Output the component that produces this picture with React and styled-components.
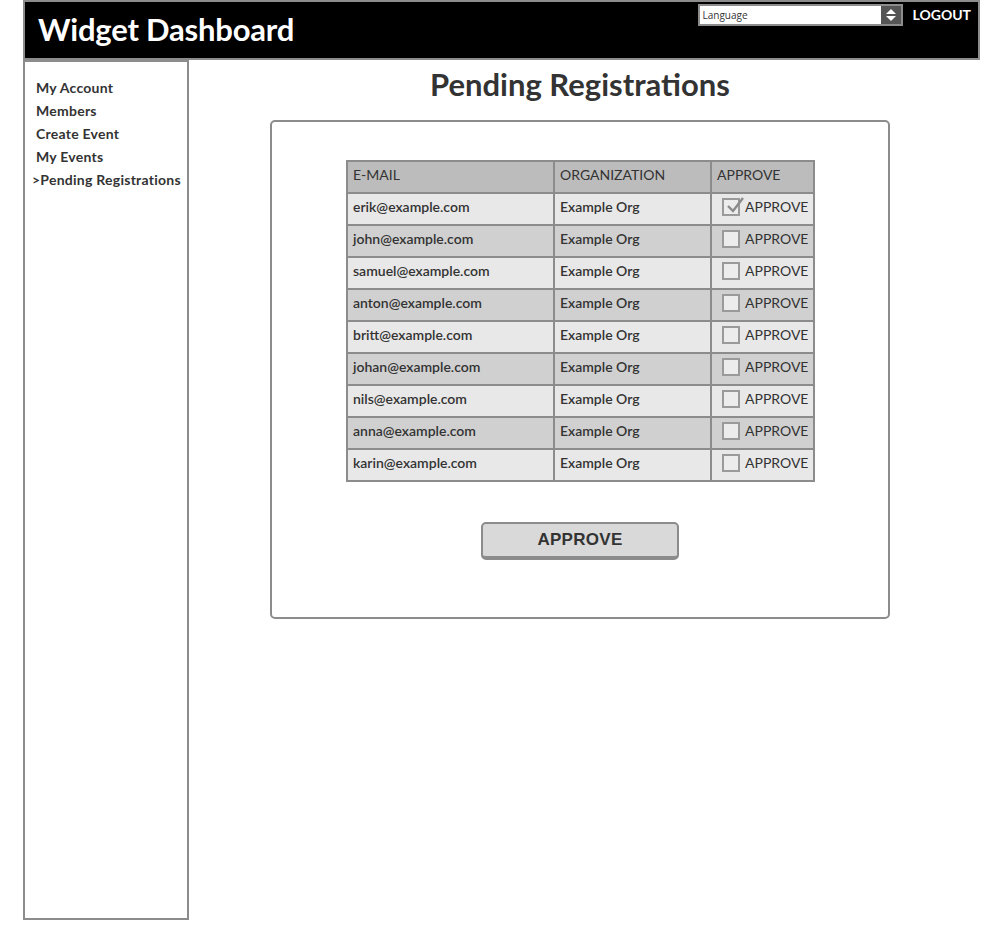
import React from 'react';
import styled, {createGlobalStyle} from 'styled-components';

const GlobalStyle = createGlobalStyle`
  body {
    margin: 0;
    background: #fff;
    font-family: Lato, "Open Sans", sans-serif;
  }
`;

const rows = [
    {email: 'erik@example.com', checked: true},
    {email: 'john@example.com'},
    {email: 'samuel@example.com'},
    {email: 'anton@example.com'},
    {email: 'britt@example.com'},
    {email: 'johan@example.com'},
    {email: 'nils@example.com'},
    {email: 'anna@example.com'},
    {email: 'karin@example.com'},
];

const menu = ['My Account', 'Members', 'Create Event', 'My Events', '>Pending Registrations'];

const SelectArrows = () => (
    <svg width="12" height="14" viewBox="0 0 12 14">
        <path d="M6 1 L11 6 H1 Z" fill="#fff"/>
        <path d="M6 13 L11 8 H1 Z" fill="#fff"/>
    </svg>
);

const CheckMark = () => (
    <svg width="20" height="20" viewBox="0 0 20 20" style={{position: 'absolute', left: 1, top: -4}}>
        <path d="M3 10 L8 15 L18 2" fill="none" stroke="#8a8a8a" strokeWidth="2.4"/>
    </svg>
);

const App = () => {

    return (
        <Page>
            <GlobalStyle/>
            <Header>
                <Logo>Widget Dashboard</Logo>
                <HeaderTools>
                    <Select>
                        <span>Language</span>
                        <SelectButton><SelectArrows/></SelectButton>
                    </Select>
                    <Logout>LOGOUT</Logout>
                </HeaderTools>
            </Header>
            <Body>
                <Sidebar>
                    <ul>
                        {menu.map((m, i) => (
                            <MenuItem key={m} active={i === menu.length - 1}>{m}</MenuItem>
                        ))}
                    </ul>
                </Sidebar>
                <Main>
                    <Title>Pending Registrations</Title>
                    <Panel>
                        <Table>
                            <thead>
                            <tr>
                                <Th>E-MAIL</Th>
                                <Th>ORGANIZATION</Th>
                                <Th>APPROVE</Th>
                            </tr>
                            </thead>
                            <tbody>
                            {rows.map((r, i) => (
                                <Row key={r.email} dark={i % 2 === 1}>
                                    <Td>{r.email}</Td>
                                    <Td>Example Org</Td>
                                    <Td>
                                        <CheckLabel>
                                            <Box>{r.checked && <CheckMark/>}</Box>
                                            APPROVE
                                        </CheckLabel>
                                    </Td>
                                </Row>
                            ))}
                            </tbody>
                        </Table>
                        <ApproveButton>APPROVE</ApproveButton>
                    </Panel>
                </Main>
            </Body>
        </Page>
    )
}

const Page = styled.div`
  width: 1000px;
  padding-left: 23px;
  box-sizing: border-box;
`;

const Header = styled.header`
  width: 957px;
  height: 60px;
  box-sizing: border-box;
  background: #000;
  border: 2px solid #8c8c8c;
  display: flex;
  justify-content: space-between;
  align-items: flex-start;
`;

const Logo = styled.h1`
  margin: 10px 0 0 13px;
  color: #fff;
  font-size: 31px;
  font-weight: 700;
  line-height: 34px;
  letter-spacing: -0.2px;
`;

const HeaderTools = styled.div`
  display: flex;
  align-items: center;
  margin-top: 2px;
  margin-right: 7px;
`;

const Select = styled.div`
  width: 205px;
  height: 22px;
  box-sizing: border-box;
  border: 2px solid #8c8c8c;
  background: #fff;
  display: flex;
  align-items: center;
  justify-content: space-between;

  span {
    font-family: "Open Sans", sans-serif;
    font-size: 10px;
    color: #333;
    padding-left: 3px;
  }
`;

const SelectButton = styled.div`
  width: 20px;
  height: 100%;
  background: #555;
  display: flex;
  align-items: center;
  justify-content: center;
`;

const Logout = styled.span`
  margin-left: 10px;
  color: #fff;
  font-weight: 700;
  font-size: 14px;
  margin-top: -2px;
`;

const Body = styled.div`
  display: flex;
`;

const Sidebar = styled.nav`
  width: 166px;
  height: 860px;
  box-sizing: border-box;
  border: 2px solid #8c8c8c;
  background: #fff;

  ul {
    list-style: none;
    margin: 0;
    padding: 14px 0 0 11px;
  }
`;

const MenuItem = styled.li`
  font-size: 14px;
  font-weight: 700;
  color: #333;
  line-height: 23px;
  letter-spacing: 0.25px;
  margin-left: ${props => props.active ? '-4px' : '0'};
`;

const Main = styled.main`
  flex: 1;
  display: flex;
  flex-direction: column;
  padding-left: 81px;
`;

const Title = styled.h2`
  width: 620px;
  margin: 4px 0 0;
  text-align: center;
  font-size: 31px;
  font-weight: 700;
  color: #333;
  line-height: 40px;
`;

const Panel = styled.section`
  width: 620px;
  height: 499px;
  margin-top: 16px;
  box-sizing: border-box;
  border: 2px solid #8c8c8c;
  border-radius: 5px;
  padding: 38px 0 0 74px;
`;

const Table = styled.table`
  border-collapse: collapse;
  border: 2px solid #8c8c8c;
  font-size: 14px;
  color: #333;
`;

const Th = styled.th`
  height: 25px;
  padding: 0 5px 5px;
  text-align: left;
  font-weight: 400;
  font-size: 14px;
  background: #bcbcbc;
  border: 2px solid #8c8c8c;

  &:nth-child(1) { width: 195px; }
  &:nth-child(2) { width: 145px; }
  &:nth-child(3) { width: 88px; }
`;

const Row = styled.tr`
  background: ${props => props.dark ? '#d0d0d0' : '#e8e8e8'};
`;

const Td = styled.td`
  height: 25px;
  padding: 0 5px 5px;
  border: 2px solid #8c8c8c;
  font-weight: 600;
  white-space: nowrap;
`;

const CheckLabel = styled.div`
  display: flex;
  align-items: center;
  gap: 5px;
  padding-left: 5px;
  font-weight: 400;
`;

const Box = styled.span`
  position: relative;
  width: 14px;
  height: 14px;
  border: 2px solid #9a9a9a;
  background: #ececec;
`;

const ApproveButton = styled.button`
  display: block;
  margin: 40px 0 0 135px;
  width: 198px;
  height: 38px;
  box-sizing: border-box;
  background: #d9d9d9;
  border: 2px solid #8c8c8c;
  border-bottom-width: 4px;
  border-radius: 5px;
  font-family: "Liberation Sans", Arial, sans-serif;
  font-weight: 700;
  font-size: 17px;
  color: #333;
  letter-spacing: 0.3px;
`;

export default App;
